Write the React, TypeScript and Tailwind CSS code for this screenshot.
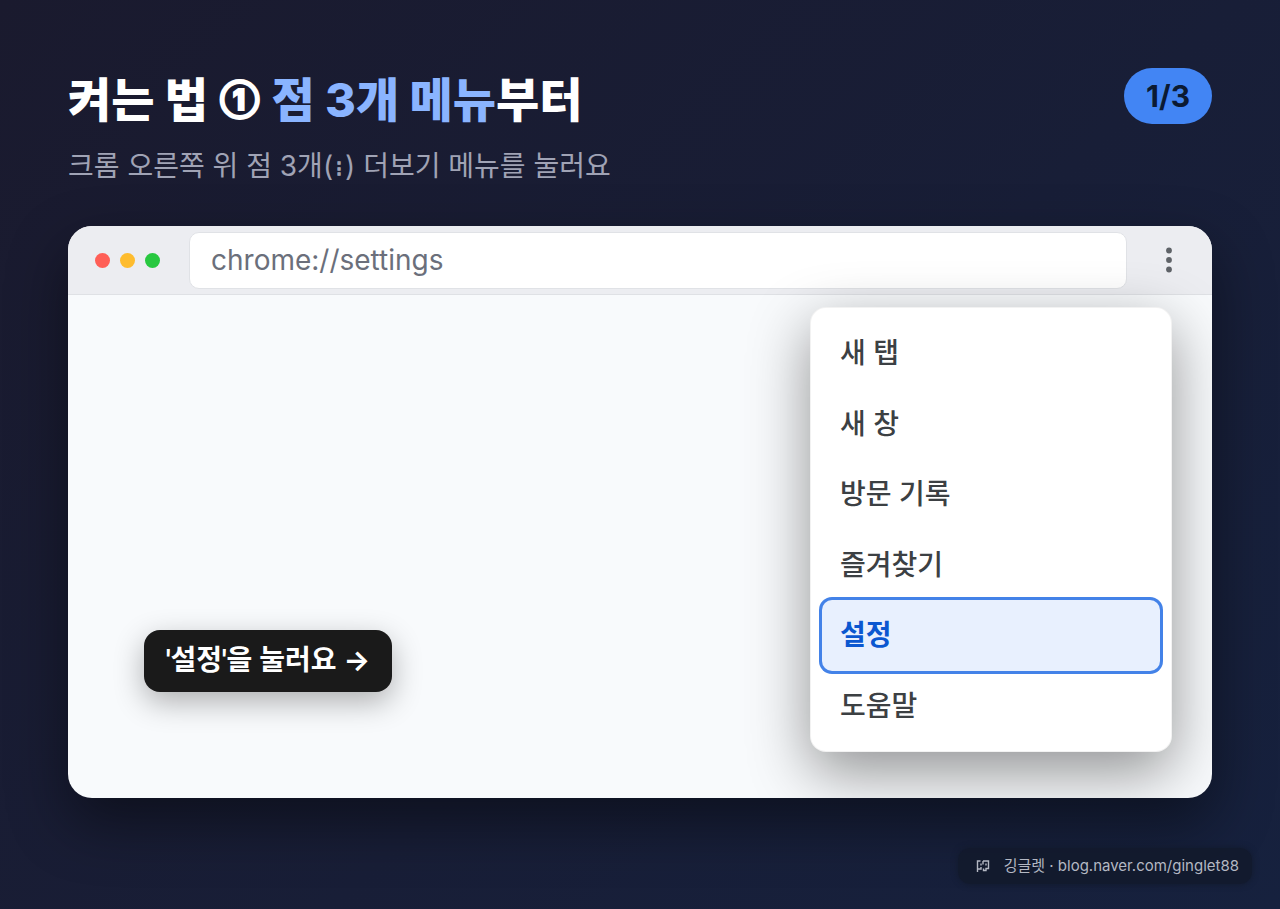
import clsx from 'clsx';

const menuItems = ['새 탭', '새 창', '방문 기록', '즐겨찾기', '설정', '도움말'];
const activeItem = '설정';

function WindowDots() {
  return (
    <div className="flex gap-[10px]">
      <span className="size-[15px] rounded-full bg-[#ff5f57]"></span>
      <span className="size-[15px] rounded-full bg-[#febc2e]"></span>
      <span className="size-[15px] rounded-full bg-[#28c840]"></span>
    </div>
  );
}

function Toolbar() {
  return (
    <div className="flex items-center h-[69px] pl-[27px] pr-[25px] bg-[#ecedf1] border-b border-[#dfe1e5]">
      <WindowDots />
      <input
        type="text"
        aria-label="주소창"
        defaultValue="chrome://settings"
        className="flex-1 min-w-0 h-[57px] ml-[29px] mr-6 px-[21px] rounded-[10px] bg-white border border-[#e0e2e6] text-[28px] text-[#6b6f7b] outline-none"
      />
      <button type="button" aria-label="더보기" className="flex size-9 items-center justify-center">
        <svg width="36" height="36" viewBox="0 0 36 36" fill="#5f6368">
          <circle cx="18" cy="8.500" r="2.900" />
          <circle cx="18" cy="18" r="2.900" />
          <circle cx="18" cy="27.500" r="2.900" />
        </svg>
      </button>
    </div>
  );
}

function MoreMenu() {
  return (
    <nav className="absolute top-3 right-10 w-[362px] min-h-[445px] px-[11px] py-[10px] grid auto-rows-fr rounded-2xl bg-white border border-black/5 shadow-[0_20px_60px_rgba(0,0,0,0.42)]">
      {menuItems.map((item) => (
        <button
          key={item}
          type="button"
          className={clsx(
            'px-[18px] rounded-[10px] text-left text-[28px]',
            item === activeItem
              ? 'bg-[#e8f0fe] text-[#0b57d0] font-bold ring-3 ring-[#4382e8]'
              : 'text-[#3c4043] font-medium'
          )}
        >
          {item}
        </button>
      ))}
    </nav>
  );
}

export default function App() {
  return (
    <main className="relative min-h-screen flex flex-col px-[68px] pt-[68px] pb-[111px] bg-linear-135 from-[#1a1a2e] to-[#16213e] font-['Inter','Noto_Sans_CJK_KR',sans-serif]">
      <header className="flex items-start justify-between">
        <div>
          <h1 className="text-[47px] leading-[64px] font-extrabold text-white">
            켜는 법{' '}
            <span className="mx-[2px] align-[7px] text-[28px] leading-none [-webkit-text-stroke:2px_white]">①</span>{' '}
            <span className="text-[#8ab4ff]">점 3개 메뉴</span>부터
          </h1>
          <p className="mt-3 text-[28px] leading-[44px] text-[#a0a3b5]">
            크롬 오른쪽 위 점 3개(
            <span className="inline-flex w-3 justify-center align-[2px] text-base leading-none font-bold [-webkit-text-stroke:1px_#a0a3b5]">
              ⋮
            </span>
            ) 더보기 메뉴를 눌러요
          </p>
        </div>
        <span className="px-[22px] rounded-full bg-[#4285f4] text-[30px] leading-[56px] font-bold text-[#0b1a33]">
          1/3
        </span>
      </header>

      <section className="mt-[38px] flex flex-1 flex-col rounded-3xl overflow-hidden bg-[#f8fafc] shadow-[0_24px_60px_rgba(0,0,0,0.45)]">
        <Toolbar />
        <div className="relative flex-1 min-h-[503px]">
          <MoreMenu />
          <div className="absolute left-[76px] bottom-[106px] px-[22px] rounded-2xl bg-[#1a1a1a] font-['Roboto','Inter','Noto_Sans_CJK_KR',sans-serif] text-[28px] leading-[62px] font-bold text-white shadow-[0_10px_30px_rgba(0,0,0,0.3)]">
            '설정'을 눌러요 →
          </div>
        </div>
      </section>

      {/* Blog signature */}
      <footer className="absolute right-7 bottom-[25px] flex items-center h-9 pl-[18px] pr-[13px] gap-[14px] rounded-xl bg-[#121a2c]/90 shadow-[0_0_6px_#121a2c] text-[15px] text-[#b4b8c3]">
        <svg width="14" height="14" viewBox="0 0 14 14" fill="none" stroke="currentColor" strokeWidth="1.400">
          <path d="M4.500 2H1.500v11M1.500 10h3.500V8M5 4.500v2M7 2h5.500v7.500H10v2H7.500V9.500" />
          <path d="M7 2v3.500M10 4.500v2" />
        </svg>
        <a href="https://blog.naver.com/ginglet88">깅글렛 · blog.naver.com/ginglet88</a>
      </footer>
    </main>
  );
}
